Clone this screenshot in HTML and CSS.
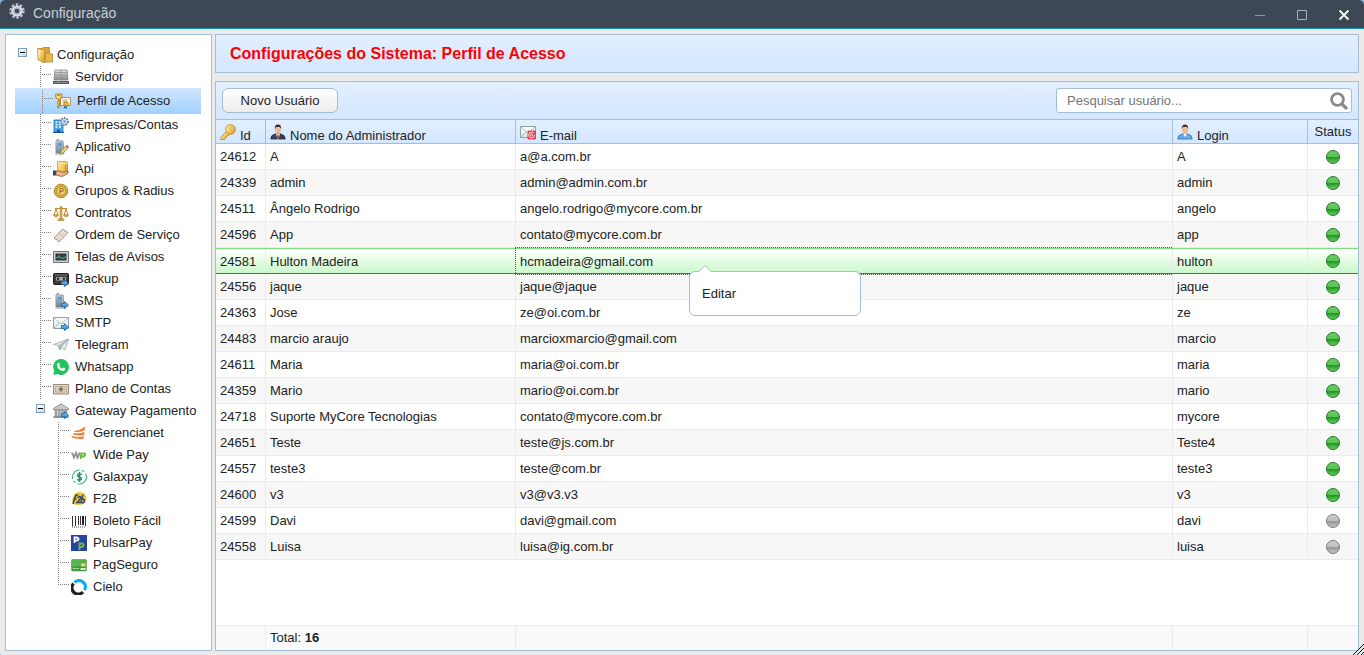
FILE: index.html
```html
<!DOCTYPE html>
<html lang="pt-BR">
<head>
<meta charset="utf-8">
<title>Configuração</title>
<link rel="stylesheet" href="styles.css">
</head>
<body>
<svg class="sprite" aria-hidden="true">
  <defs>
    <linearGradient id="gold" x1="0" y1="0" x2="1" y2="1"><stop offset="0" stop-color="#ffeeb0"/><stop offset=".5" stop-color="#f3cb62"/><stop offset="1" stop-color="#cf9526"/></linearGradient>
    <linearGradient id="steel" x1="0" y1="0" x2="0" y2="1"><stop offset="0" stop-color="#e4e4e4"/><stop offset="1" stop-color="#8b8b8b"/></linearGradient>
    <linearGradient id="sky" x1="0" y1="0" x2="0" y2="1"><stop offset="0" stop-color="#8fccf7"/><stop offset="1" stop-color="#2478c4"/></linearGradient>
    <linearGradient id="led-g" x1="0" y1="0" x2="0" y2="1"><stop offset="0" stop-color="#6fce62"/><stop offset=".48" stop-color="#57c451"/><stop offset=".52" stop-color="#279027"/><stop offset="1" stop-color="#62d659"/></linearGradient>
    <linearGradient id="led-o" x1="0" y1="0" x2="0" y2="1"><stop offset="0" stop-color="#cfcfcf"/><stop offset=".48" stop-color="#bebebe"/><stop offset=".52" stop-color="#979797"/><stop offset="1" stop-color="#c4c4c4"/></linearGradient>
    <linearGradient id="paper" x1="0" y1="0" x2="0" y2="1"><stop offset="0" stop-color="#ffffff"/><stop offset="1" stop-color="#dce6e6"/></linearGradient>
  </defs>
  <symbol id="i-gear" viewBox="0 0 16 16"><circle cx="8" cy="8" r="6.4" fill="none" stroke="#bdbdc9" stroke-width="2.6" stroke-dasharray="2.4 1.62"/><circle cx="8" cy="8" r="5.6" fill="#dedee8"/><circle cx="8" cy="8" r="3.8" fill="#b6b6c6"/><circle cx="8" cy="8" r="2.3" fill="#3d4854"/></symbol>
  <symbol id="i-folder" viewBox="0 0 16 16"><path d="M1 1.5h4l1-1h6.500v12H1z" fill="#dca63c" stroke="#b88424" stroke-width=".8"/><path d="M9 5.500h3l1 1.500h2.500v8H8z" fill="#e9b94d" stroke="#b88424" stroke-width=".8"/><path d="M.5 1.500l7 1.500v13l-6-3z" fill="url(#gold)" stroke="#c28f2c" stroke-width=".8"/><path d="M2 3v8" stroke="#fff6d0"/></symbol>
  <symbol id="i-server" viewBox="0 0 16 16"><path d="M2 1h12l1 10H1z" fill="url(#steel)" stroke="#858585" stroke-width=".8"/><path d="M8 1v11M2 3.500h12M2 6h12M2 8.500h12" stroke="#8d8d8d" stroke-width=".7"/><path d="M0 12h16v3H0z" fill="#555"/><path d="M1 13.500h14" stroke="#8b8b8b"/><circle cx="5" cy="13" r=".7" fill="#79dd55"/></symbol>
  <symbol id="i-profile" viewBox="0 0 16 16"><path d="M5.500 4.500h9.900v8H5.500z" fill="#fffbe4" stroke="#b8914a"/><path d="M7.500 7h5M7.500 9h4" stroke="#8b8b8b" stroke-width=".8"/><path d="M.8 1h6v4l-2 1v8l-1.500 1-1-2 1-1.500-1-1.500 1-1V6L.8 5z" fill="url(#gold)" stroke="#a87420" stroke-width=".9"/><path d="M2.500 2.500h2" stroke="#875b14"/><path d="M9.500 12l-1 4 2-1 1.500 1v-4z" fill="#2677c8"/><circle cx="11" cy="11" r="2.300" fill="#efb92d" stroke="#a4741c" stroke-width=".8"/></symbol>
  <symbol id="i-company" viewBox="0 0 16 16"><path d="M1 3h9v12H1z" fill="#4ea6ec" stroke="#1d6db6" stroke-width=".8"/><path d="M2.500 5h2M6 5h2M2.500 7.500h2M6 7.500h2M2.500 10h2M6 10h2" stroke="#e5f7ff" stroke-width="1.300"/><path d="M4 12.500h3V16H4zM0 15h11v1H0z" fill="#175696"/><circle cx="11.500" cy="4.500" r="3.500" fill="#d6e0ea" stroke="#6b8194" stroke-width="1.800" stroke-dasharray="1.600 1"/><circle cx="11.500" cy="4.500" r="1.300" fill="#54a9e7"/></symbol>
  <symbol id="i-phone" viewBox="0 0 16 16"><path d="M2 14.500h9v1.500H2z" fill="#ccc"/><path d="M3 2h1V.5h1.500V2H10l1 12H3z" fill="url(#steel)" stroke="#728491" stroke-width=".8"/><path d="M4.500 3.500h4.300l.2 4H4.500z" fill="#4d9ee4"/><path d="M4.500 9h1M7 9h1M4.500 11h1M7 11h1M4.500 13h1M7 13h1" stroke="#3f647e"/></symbol>
  <symbol id="i-arrow" viewBox="0 0 16 16"><path d="M8.500 10.500h3v-2l4 3.700-4 3.500v-2h-3z" fill="url(#sky)" stroke="#17639f" stroke-width=".8"/></symbol>
  <symbol id="i-app" viewBox="0 0 16 16"><use href="#i-phone"/><path d="M7 15l1-3 5-5 2 2-5 5z" fill="#f1d27a" stroke="#7b7446" stroke-width=".7"/><path d="M13 7l1-1 2 2-1 1z" fill="#d8473f"/></symbol>
  <symbol id="i-api" viewBox="0 0 16 16"><path d="M4.500.5h9l1 1v11h-10z" fill="url(#gold)" stroke="#c49740" stroke-width=".8"/><path d="M12.500 4v6M14.500 4v6" stroke="#4e9ed8" stroke-width=".8"/><path d="M0 9.500h3v5H0z" fill="#21496e"/><path d="M3 10h3l3 1 2 .5 4-1.500q1 1-1 3L9 15.500 3 14z" fill="#efb68c" stroke="#8b5533" stroke-width=".8"/></symbol>
  <symbol id="i-coin" viewBox="0 0 16 16"><circle cx="8" cy="8" r="6.800" fill="#d9ae45" stroke="#b3872c"/><circle cx="8" cy="8" r="4.600" fill="#edcc70" stroke="#a87a22" stroke-width=".7"/><path d="M7 11V5.500h1.500q1.800 0 1.800 1.500T8.500 8.500H7" fill="none" stroke="#92671b"/></symbol>
  <symbol id="i-scale" viewBox="0 0 16 16"><path d="M8 1v13M2 3.500h12M3 4l-2 6h4zM13 4l-2 6h4z" fill="none" stroke="#bd8a31"/><path d="M7 2h2v12H7zM5 14h6v1.500H5zM.5 10h5q-1 2-2.500 2T.5 10zM10.500 10h5q-1 2-2.500 2t-2.500-2z" fill="#e4b555" stroke="#ad7a24" stroke-width=".6"/></symbol>
  <symbol id="i-ticket" viewBox="0 0 16 16"><path d="M1 11l8.500-9 2 1q0 1.500 1.500 1.500l2 1L6 15q-1.500 0-1.500-1.500T2.500 12.500z" fill="#eadbd0" stroke="#a18c80" stroke-width=".9"/><path d="M6 6l5 4" stroke="#b39d91" stroke-dasharray="1 1"/></symbol>
  <symbol id="i-screen" viewBox="0 0 16 16"><path d="M.5 2.500h15v11H.5z" fill="#d0d0d0" stroke="#737373"/><path d="M2.500 4.500h11v7h-11z" fill="#2c3b3d"/><path d="M3 8.500h2l1-2 1 3 1.500-1h1l1 1.500 1-2H13" fill="none" stroke="#65c7a2" stroke-width=".8"/></symbol>
  <symbol id="i-backup" viewBox="0 0 16 16"><rect x=".5" y="2.500" width="15" height="11" rx="1" fill="#3c3c3c" stroke="#1e1e1e"/><path d="M2 4h12" stroke="#777"/><path d="M3 6h10v3.500H3z" fill="#aaa"/><circle cx="5" cy="7.700" r="1.200" fill="#222"/><circle cx="11" cy="7.700" r="1.200" fill="#222"/><use href="#i-arrow"/></symbol>
  <symbol id="i-sms" viewBox="0 0 16 16"><use href="#i-phone"/><use href="#i-arrow"/></symbol>
  <symbol id="i-mail" viewBox="0 0 16 16"><path d="M.5 2.500h15v11H.5z" fill="url(#paper)" stroke="#91a3a1"/><path d="M1 3l7 6 7-6M1 13l5-5M15 13l-5-5" fill="none" stroke="#9cafae" stroke-width=".8"/></symbol>
  <symbol id="i-smtp" viewBox="0 0 16 16"><use href="#i-mail"/><use href="#i-arrow"/></symbol>
  <symbol id="i-email" viewBox="0 0 16 16"><use href="#i-mail"/><rect x="7.500" y="6.500" width="8.500" height="9" rx="1.500" fill="#d9414b"/><circle cx="11.700" cy="11" r="3" fill="none" stroke="#ffe9e9" stroke-width=".9" stroke-dasharray="16 2.500"/><circle cx="11.700" cy="11" r="1.200" fill="none" stroke="#ffe9e9" stroke-width=".8"/></symbol>
  <symbol id="i-plane" viewBox="0 0 16 16"><path d="M.5 7.500L15.500 2l-3.500 11-4-2.500-1.500 2.500-1-4.500z" fill="#e4ecec" stroke="#97a9a8" stroke-width=".8"/><path d="M15 2.500L5.500 9l1 4 1.500-3z" fill="#aebfbe" stroke="#889d9b" stroke-width=".5"/></symbol>
  <symbol id="i-whats" viewBox="0 0 16 16"><path d="M8 0a8 8 0 1 1-3.700 15.100L.2 16l1-4A8 8 0 0 1 8 0z" fill="#25c35b"/><path d="M5 3.800l1.300.1.800 2-.8 1.100q1 2 2.900 2.700l1-1.100 2 1q.2 2.200-2.200 2.300Q5.500 11.500 4 7q-.4-2 1-3.200z" fill="#fff"/></symbol>
  <symbol id="i-money" viewBox="0 0 16 16"><path d="M.5 3.500h15v9.500H.5z" fill="#e7d8c9" stroke="#968777"/><path d="M2.500 5.500h11v5.500h-11z" fill="none" stroke="#ae9c89" stroke-width=".8"/><ellipse cx="8" cy="8.300" rx="1.800" ry="2.300" fill="#7e7061"/><path d="M4 8.300h1.500M10.500 8.300H12" stroke="#8e7c68"/></symbol>
  <symbol id="i-bank" viewBox="0 0 16 16"><path d="M.5 5.500L8 .8l7.500 4.700v1.200H.5z" fill="#c9c9c9" stroke="#818181" stroke-width=".8"/><path d="M2 7h2v6H2zM5.300 7h2v6h-2zM8.700 7h2v6h-2zM12 7h2v6h-2z" fill="#aaa" stroke="#7d7d7d" stroke-width=".5"/><path d="M.5 13h15v2H.5z" fill="#929292"/><use href="#i-arrow"/></symbol>
  <symbol id="i-geren" viewBox="0 0 16 16"><path d="M3.500 6Q9 5.500 14.500 1.500l-1 4Q9 7.500 3 7zM2.500 8q6 1 11-1l-.5 3q-4.500 1-11-.5zM1 11q6 2 12 .3l-.5 2.500Q7 14.500.5 12.500z" fill="#f57b32"/></symbol>
  <symbol id="i-wide" viewBox="0 0 16 16"><path d="M1 5.500l2 5 2-4.500 1.500 4.500 2.500-5" fill="none" stroke="#949494" stroke-width="2"/><path d="M9.500 12l1-5.500h2.800q1 0 .8 1.300T12.500 9.500H10" fill="none" stroke="#6db83c" stroke-width="2"/></symbol>
  <symbol id="i-galax" viewBox="0 0 16 16"><circle cx="8.500" cy="8" r="7" fill="none" stroke="#35b58a" stroke-width="1.100" stroke-dasharray="13 2 3 2"/><path d="M10.800 5.700Q8.500 4.300 7 5.500t.5 2.200l2 .7q1.500.8.300 2.200T6 10.300M8.500 3v10" fill="none" stroke="#189366" stroke-width="1.500"/></symbol>
  <symbol id="i-f2b" viewBox="0 0 16 16"><path d="M3 3q6-4 11 0 2 3 1 6-1 5-8 5-6 0-6-4z" fill="#efc72f"/><path d="M2 13L4.500 5q.5-1.500 2.500-1M2.500 8h3M6.500 7q1-2 2.500-1.500t-.5 3.500L6 11.500h3.500M12 3.500l-2 8q3 1.200 3.500-1.500T11 8.500" fill="none" stroke="#35476a" stroke-width="1.500"/></symbol>
  <symbol id="i-bar" viewBox="0 0 16 16"><path d="M1.500 3v10M4.500 3v10M7.500 3v9M9.500 3v9M14.500 3v10" stroke="#333"/><path d="M12 3v9" stroke="#222" stroke-width="2"/><path d="M1 14h14" stroke="#555" stroke-dasharray="1 1"/></symbol>
  <symbol id="i-pulsar" viewBox="0 0 16 16"><path d="M0 0h16v16H0z" fill="#25449f"/><path d="M3.500 8V2.500h2q2 0 2 1.600T5.500 5.700h-2" fill="none" stroke="#fff" stroke-width="1.800"/><path d="M8.500 15V8.500h2q2 0 2 1.800t-2 1.800h-2" fill="none" stroke="#74ba3e" stroke-width="1.800"/></symbol>
  <symbol id="i-pag" viewBox="0 0 16 16"><rect x=".3" y="2.300" width="15.400" height="12" rx="1" fill="#3c9b3c"/><path d="M.5 3h15v5L.5 10z" fill="#5ab352"/><path d="M2 11.500h6" stroke="#b6e7ad" stroke-dasharray="2 .5"/><path d="M10 6.500h4.500v3H10z" fill="#f0d275"/><path d="M9.500 11h5v2h-5z" fill="#d4eccd"/></symbol>
  <symbol id="i-cielo" viewBox="0 0 16 16"><path d="M3.500 3.500A6.300 6.300 0 0 1 13.500 11" fill="none" stroke="#08aef2" stroke-width="3.200"/><path d="M2.500 4.500A6.300 6.300 0 0 0 12 13" fill="none" stroke="#231f20" stroke-width="3.200"/></symbol>
  <symbol id="i-key" viewBox="0 0 16 16"><path d="M7 7l3 3-2 2H6.500v1.500H5L4.500 15.500H.8V13z" fill="url(#gold)" stroke="#ba8a19" stroke-width=".8"/><circle cx="10.500" cy="5.500" r="4.900" fill="url(#gold)" stroke="#ba8a19" stroke-width=".8"/><circle cx="12" cy="4" r="1.400" fill="#fff" stroke="#b48a28" stroke-width=".7"/></symbol>
  <symbol id="i-admin" viewBox="0 0 16 16"><path d="M.8 15q0-4 4-4.800L8 9l3.200 1.200q4 .8 4 4.800z" fill="#35405b" stroke="#202940" stroke-width=".8"/><path d="M6 9.500h4L8.700 15H7.300z" fill="#f6f6ff"/><path d="M7.500 10.500h1l.7 4h-2.400z" fill="#a72d32"/><ellipse cx="8" cy="5.500" rx="3" ry="4" fill="#efbc94"/><path d="M4.800 5Q4.500.5 8 .5T11.200 5L10 3H6z" fill="#3c2923"/></symbol>
  <symbol id="i-user" viewBox="0 0 16 16"><path d="M.8 15q0-4 4-4.800L8 9l3.200 1.200q4 .8 4 4.800z" fill="#6aabed" stroke="#2b6eb6" stroke-width=".8"/><path d="M6 9.500h4L8 13z" fill="#fff"/><ellipse cx="8" cy="5.500" rx="3" ry="4" fill="#efbc94"/><path d="M4.800 5Q4.500.5 8 .5T11.200 5L10 3H6z" fill="#4d3429"/></symbol>
  <symbol id="i-on" viewBox="0 0 14 14"><circle cx="7" cy="7" r="6.500" fill="url(#led-g)" stroke="#237b29"/></symbol>
  <symbol id="i-off" viewBox="0 0 14 14"><circle cx="7" cy="7" r="6.500" fill="url(#led-o)" stroke="#7c7c7c"/></symbol>
</svg>

<div class="window">
  <header class="titlebar">
    <svg class="icon"><use href="#i-gear"/></svg>
    <h1 class="titlebar-text">Configuração</h1>
    <div class="window-controls">
      <button type="button" class="window-button" aria-label="Minimizar"><svg viewBox="0 0 12 12"><path d="M1 6.500h10" stroke="#8e959c" fill="none"/></svg></button>
      <button type="button" class="window-button" aria-label="Maximizar"><svg viewBox="0 0 12 12"><path d="M1.500 1.500h9v9h-9z" stroke="#aab0b5" fill="none"/></svg></button>
      <button type="button" class="window-button" aria-label="Fechar"><svg viewBox="0 0 12 12"><path d="M1.500 1.500l9 9M10.500 1.500l-9 9" stroke="#f4f4f4" stroke-width="2" fill="none"/></svg></button>
    </div>
  </header>

  <div class="workspace">
    <nav class="sidebar" aria-label="Configuração">
      <div class="node level-0"><button type="button" class="toggle" aria-label="Recolher Configuração"></button><svg class="icon"><use href="#i-folder"/></svg><a href="#configuracao">Configuração</a></div>
      <ul class="tree">
        <li class="node"><span class="guide"></span><svg class="icon"><use href="#i-server"/></svg><a href="#servidor">Servidor</a></li>
        <li class="node selected"><span class="guide"></span><svg class="icon"><use href="#i-profile"/></svg><a href="#perfil" aria-current="page">Perfil de Acesso</a></li>
        <li class="node"><span class="guide"></span><svg class="icon"><use href="#i-company"/></svg><a href="#empresas">Empresas/Contas</a></li>
        <li class="node"><span class="guide"></span><svg class="icon"><use href="#i-app"/></svg><a href="#aplicativo">Aplicativo</a></li>
        <li class="node"><span class="guide"></span><svg class="icon"><use href="#i-api"/></svg><a href="#api">Api</a></li>
        <li class="node"><span class="guide"></span><svg class="icon"><use href="#i-coin"/></svg><a href="#grupos">Grupos &amp; Radius</a></li>
        <li class="node"><span class="guide"></span><svg class="icon"><use href="#i-scale"/></svg><a href="#contratos">Contratos</a></li>
        <li class="node"><span class="guide"></span><svg class="icon"><use href="#i-ticket"/></svg><a href="#ordem">Ordem de Serviço</a></li>
        <li class="node"><span class="guide"></span><svg class="icon"><use href="#i-screen"/></svg><a href="#telas">Telas de Avisos</a></li>
        <li class="node"><span class="guide"></span><svg class="icon"><use href="#i-backup"/></svg><a href="#backup">Backup</a></li>
        <li class="node"><span class="guide"></span><svg class="icon"><use href="#i-sms"/></svg><a href="#sms">SMS</a></li>
        <li class="node"><span class="guide"></span><svg class="icon"><use href="#i-smtp"/></svg><a href="#smtp">SMTP</a></li>
        <li class="node"><span class="guide"></span><svg class="icon"><use href="#i-plane"/></svg><a href="#telegram">Telegram</a></li>
        <li class="node"><span class="guide"></span><svg class="icon"><use href="#i-whats"/></svg><a href="#whatsapp">Whatsapp</a></li>
        <li class="node"><span class="guide"></span><svg class="icon"><use href="#i-money"/></svg><a href="#plano">Plano de Contas</a></li>
        <li>
          <div class="node group"><button type="button" class="toggle" aria-label="Recolher Gateway Pagamento"></button><svg class="icon"><use href="#i-bank"/></svg><a href="#gateway">Gateway Pagamento</a></div>
          <ul class="tree subtree">
            <li class="node"><span class="guide"></span><svg class="icon"><use href="#i-geren"/></svg><a href="#gerencianet">Gerencianet</a></li>
            <li class="node"><span class="guide"></span><svg class="icon"><use href="#i-wide"/></svg><a href="#widepay">Wide Pay</a></li>
            <li class="node"><span class="guide"></span><svg class="icon"><use href="#i-galax"/></svg><a href="#galaxpay">Galaxpay</a></li>
            <li class="node"><span class="guide"></span><svg class="icon"><use href="#i-f2b"/></svg><a href="#f2b">F2B</a></li>
            <li class="node"><span class="guide"></span><svg class="icon"><use href="#i-bar"/></svg><a href="#boleto">Boleto Fácil</a></li>
            <li class="node"><span class="guide"></span><svg class="icon"><use href="#i-pulsar"/></svg><a href="#pulsarpay">PulsarPay</a></li>
            <li class="node"><span class="guide"></span><svg class="icon"><use href="#i-pag"/></svg><a href="#pagseguro">PagSeguro</a></li>
            <li class="node"><span class="guide last"></span><svg class="icon"><use href="#i-cielo"/></svg><a href="#cielo">Cielo</a></li>
          </ul>
        </li>
      </ul>
    </nav>

    <main class="main">
      <h2 class="page-title">Configurações do Sistema: Perfil de Acesso</h2>
      <section class="panel">
        <div class="toolbar">
          <button type="button" class="button">Novo Usuário</button>
          <div class="search">
            <input type="text" class="search-input" placeholder="Pesquisar usuário..." aria-label="Pesquisar usuário">
            <svg class="search-icon" viewBox="0 0 18 18"><circle cx="7.500" cy="7.500" r="5.900" fill="none" stroke="#8b8b8b" stroke-width="2.800"/><path d="M11.500 11.500l5.500 5.500" stroke="#8b8b8b" stroke-width="3.200"/></svg>
          </div>
        </div>
        <table class="grid">
          <thead>
            <tr>
              <th scope="col"><svg class="icon"><use href="#i-key"/></svg><span>Id</span></th>
              <th scope="col"><svg class="icon"><use href="#i-admin"/></svg><span>Nome do Administrador</span></th>
              <th scope="col"><svg class="icon"><use href="#i-email"/></svg><span>E-mail</span></th>
              <th scope="col"><svg class="icon"><use href="#i-user"/></svg><span>Login</span></th>
              <th scope="col" class="status-head">Status</th>
            </tr>
          </thead>
          <tbody>
            <tr><td>24612</td><td>A</td><td>a@a.com.br</td><td>A</td><td class="status"><svg class="led" role="img" aria-label="Ativo"><use href="#i-on"/></svg></td></tr>
            <tr><td>24339</td><td>admin</td><td>admin@admin.com.br</td><td>admin</td><td class="status"><svg class="led" role="img" aria-label="Ativo"><use href="#i-on"/></svg></td></tr>
            <tr><td>24511</td><td>Ângelo Rodrigo</td><td>angelo.rodrigo@mycore.com.br</td><td>angelo</td><td class="status"><svg class="led" role="img" aria-label="Ativo"><use href="#i-on"/></svg></td></tr>
            <tr><td>24596</td><td>App</td><td>contato@mycore.com.br</td><td>app</td><td class="status"><svg class="led" role="img" aria-label="Ativo"><use href="#i-on"/></svg></td></tr>
            <tr class="row-selected"><td>24581</td><td>Hulton Madeira</td><td class="cell-focused">hcmadeira@gmail.com<div class="popup"><svg class="popup-arrow" viewBox="0 0 12 7"><path d="M0 6.500L6 .5l6 6V7H0z" fill="#fff"/><path d="M0 6.500L6 .5l6 6" fill="none" stroke="#a4bed4"/></svg><button type="button" class="popup-item">Editar</button></div></td><td>hulton</td><td class="status"><svg class="led" role="img" aria-label="Ativo"><use href="#i-on"/></svg></td></tr>
            <tr><td>24556</td><td>jaque</td><td>jaque@jaque</td><td>jaque</td><td class="status"><svg class="led" role="img" aria-label="Ativo"><use href="#i-on"/></svg></td></tr>
            <tr><td>24363</td><td>Jose</td><td>ze@oi.com.br</td><td>ze</td><td class="status"><svg class="led" role="img" aria-label="Ativo"><use href="#i-on"/></svg></td></tr>
            <tr><td>24483</td><td>marcio araujo</td><td>marcioxmarcio@gmail.com</td><td>marcio</td><td class="status"><svg class="led" role="img" aria-label="Ativo"><use href="#i-on"/></svg></td></tr>
            <tr><td>24611</td><td>Maria</td><td>maria@oi.com.br</td><td>maria</td><td class="status"><svg class="led" role="img" aria-label="Ativo"><use href="#i-on"/></svg></td></tr>
            <tr><td>24359</td><td>Mario</td><td>mario@oi.com.br</td><td>mario</td><td class="status"><svg class="led" role="img" aria-label="Ativo"><use href="#i-on"/></svg></td></tr>
            <tr><td>24718</td><td>Suporte MyCore Tecnologias</td><td>contato@mycore.com.br</td><td>mycore</td><td class="status"><svg class="led" role="img" aria-label="Ativo"><use href="#i-on"/></svg></td></tr>
            <tr><td>24651</td><td>Teste</td><td>teste@js.com.br</td><td>Teste4</td><td class="status"><svg class="led" role="img" aria-label="Ativo"><use href="#i-on"/></svg></td></tr>
            <tr><td>24557</td><td>teste3</td><td>teste@com.br</td><td>teste3</td><td class="status"><svg class="led" role="img" aria-label="Ativo"><use href="#i-on"/></svg></td></tr>
            <tr><td>24600</td><td>v3</td><td>v3@v3.v3</td><td>v3</td><td class="status"><svg class="led" role="img" aria-label="Ativo"><use href="#i-on"/></svg></td></tr>
            <tr><td>24599</td><td>Davi</td><td>davi@gmail.com</td><td>davi</td><td class="status"><svg class="led" role="img" aria-label="Inativo"><use href="#i-off"/></svg></td></tr>
            <tr><td>24558</td><td>Luisa</td><td>luisa@ig.com.br</td><td>luisa</td><td class="status"><svg class="led" role="img" aria-label="Inativo"><use href="#i-off"/></svg></td></tr>
          </tbody>
          <tfoot>
            <tr><td></td><td>Total: <b>16</b></td><td></td><td></td><td></td></tr>
          </tfoot>
        </table>
      </section>
    </main>
  </div>
  <svg class="resize-handle" viewBox="0 0 12 12" aria-hidden="true"><path d="M1 12L12 1M5 12l7-7M9 12l3-3" stroke="#111" fill="none"/></svg>
</div>
</body>
</html>
```

FILE: styles.css
```css
* {
  box-sizing: border-box;
}

:root {
  --line: #a4bed4;
  --soft: #ebebeb;
  --blue: linear-gradient(#e3efff, #d3e7ff);
}

body {
  margin: 0;
  background: #7fb5dc;
  color: #222;
  font: 13px/21px "Liberation Sans", Arial, sans-serif;
}

button,
input {
  margin: 0;
  font: inherit;
  color: inherit;
}

ul {
  margin: 0;
  padding: 0;
  list-style: none;
}

.sprite {
  position: absolute;
  width: 0;
  height: 0;
}

.icon {
  flex: none;
  width: 16px;
  height: 16px;
}

.window {
  position: relative;
  display: flex;
  flex-direction: column;
  min-height: 100vh;
  overflow: hidden;
  border-radius: 5px 5px 2px 2px;
  background: var(--soft);
}

.titlebar {
  display: flex;
  align-items: flex-start;
  gap: 8px;
  height: 29px;
  padding: 3px 14px 0 9px;
  border-bottom: 1px solid #1793b3;
  background: #3d4854;
}

.titlebar-text {
  flex: 1;
  margin: 0;
  color: #c8d0d6;
  font-size: 14px;
  font-weight: 400;
  line-height: 21px;
}

.window-controls {
  display: flex;
  gap: 30px;
  padding-top: 6px;
}

.window-button {
  width: 12px;
  height: 12px;
  padding: 0;
  border: 0;
  background: none;
}

.window-button svg {
  display: block;
}

.workspace {
  display: flex;
  flex: 1;
  gap: 3px;
  padding: 5px 5px 4px;
}

.sidebar {
  flex: none;
  width: 207px;
  padding: 9px 10px 0 9px;
  border: 1px solid var(--line);
  background: #fff;
}

.node {
  display: flex;
  align-items: flex-start;
  height: 22px;
  padding-left: 25px;
}

.level-0 {
  padding-left: 3px;
}

.group {
  padding-left: 21px;
}

.subtree .node {
  padding-left: 43px;
}

.node .icon {
  margin: 3px 6px 0 0;
}

.level-0 .icon {
  margin-right: 4px;
}

.node a {
  color: inherit;
  text-decoration: none;
  white-space: nowrap;
}

.node.selected {
  height: 26px;
  padding-top: 2px;
  padding-left: 27px;
  background: linear-gradient(#d0e7ff, #a2d0ff);
}

.selected .guide {
  height: 24px;
}

.guide {
  flex: none;
  width: 13px;
  height: 22px;
  background:
    repeating-linear-gradient(#7f7f7f 0 1px, transparent 1px 2px) 0 0 / 1px 100% no-repeat,
    repeating-linear-gradient(to right, #7f7f7f 0 1px, transparent 1px 2px) 2px 8px / 9px 1px no-repeat;
}

.guide.last {
  height: 9px;
}

.toggle {
  position: relative;
  flex: none;
  width: 9px;
  height: 9px;
  margin: 4px 8px 0 0;
  padding: 0;
  border: 1px solid #7b9ebd;
  background: linear-gradient(135deg, #fff, #d5d8dc);
}

.level-0 .toggle {
  margin-right: 10px;
}

.toggle::after {
  content: "";
  position: absolute;
  top: 3px;
  left: 1px;
  width: 5px;
  height: 1px;
  background: #000;
}

.main {
  display: flex;
  flex: 1;
  flex-direction: column;
  gap: 8px;
  min-width: 0;
}

.page-title {
  margin: 0;
  padding: 0 14px;
  border: 1px solid var(--line);
  background: var(--blue);
  color: #f00;
  font-size: 16px;
  line-height: 37px;
}

.panel {
  display: flex;
  flex: 1;
  flex-direction: column;
  border: 1px solid var(--line);
  background: #fff;
}

.toolbar {
  display: flex;
  align-items: center;
  justify-content: space-between;
  height: 38px;
  padding: 0 6px;
  border-bottom: 1px solid var(--line);
  background: var(--blue);
}

.button {
  width: 116px;
  height: 25px;
  padding: 0;
  border: 1px solid var(--line);
  border-radius: 6px;
  background: linear-gradient(#fff, #ececec);
}

.search {
  display: flex;
  align-items: center;
  width: 296px;
  height: 25px;
  padding: 0 3px 0 10px;
  border: 1px solid var(--line);
  border-radius: 3px;
  background: #fff;
}

.search-input {
  flex: 1;
  min-width: 0;
  padding: 0;
  border: 0;
  outline: 0;
  background: none;
}

.search-input::placeholder {
  color: #757575;
}

.search-icon {
  width: 18px;
  height: 18px;
}

.grid {
  display: flex;
  flex: 1;
  flex-direction: column;
}

.grid thead,
.grid tbody,
.grid tfoot {
  display: block;
}

.grid tr {
  display: grid;
  grid-template-columns: 50px 250px minmax(0, 1fr) 135px 50px;
}

.grid th,
.grid td {
  padding: 0 4px;
  border-right: 1px solid var(--soft);
}

.grid th:last-child,
.grid td:last-child {
  border-right: 0;
}

.grid thead tr {
  height: 24px;
  border-bottom: 1px solid var(--line);
  background: var(--blue);
}

.grid th {
  display: flex;
  gap: 4px;
  padding-top: 4px;
  border-color: var(--line);
  font-weight: 400;
  line-height: 23px;
}

.grid .status-head {
  justify-content: center;
  padding-top: 0;
}

.grid tbody tr {
  height: 26px;
  border-bottom: 1px solid var(--soft);
  line-height: 25px;
}

.grid tbody tr:nth-child(even) {
  background: #f7f7f7;
}

.grid tbody .row-selected {
  border-top: 1px solid #7be07b;
  border-bottom-color: #149a14;
  background: linear-gradient(#fff, #caf9ca);
}

.grid tbody .row-selected td {
  height: 24px;
}

.grid .status {
  display: flex;
  align-items: center;
  justify-content: center;
}

.led {
  width: 14px;
  height: 14px;
}

.cell-focused {
  position: relative;
}

.cell-focused::after {
  content: "";
  position: absolute;
  inset: -2px 0 -2px -1px;
  border: 1px dotted #555;
  border-right: 0;
}

.popup {
  position: absolute;
  z-index: 1;
  top: 22px;
  left: 173px;
  width: 172px;
  border: 1px solid var(--line);
  border-radius: 6px;
  background: #fff;
}

.popup-arrow {
  position: absolute;
  top: -7px;
  left: 9px;
  width: 12px;
  height: 7px;
}

.popup-item {
  display: block;
  width: 100%;
  padding: 11px 12px;
  border: 0;
  background: none;
  line-height: 21px;
  text-align: left;
}

.grid tfoot {
  margin-top: auto;
}

.grid tfoot tr {
  height: 25px;
  border-top: 1px solid var(--soft);
  background: #fafafa;
  line-height: 23px;
}

.resize-handle {
  position: absolute;
  right: 0;
  bottom: 0;
  width: 12px;
  height: 12px;
}
```
